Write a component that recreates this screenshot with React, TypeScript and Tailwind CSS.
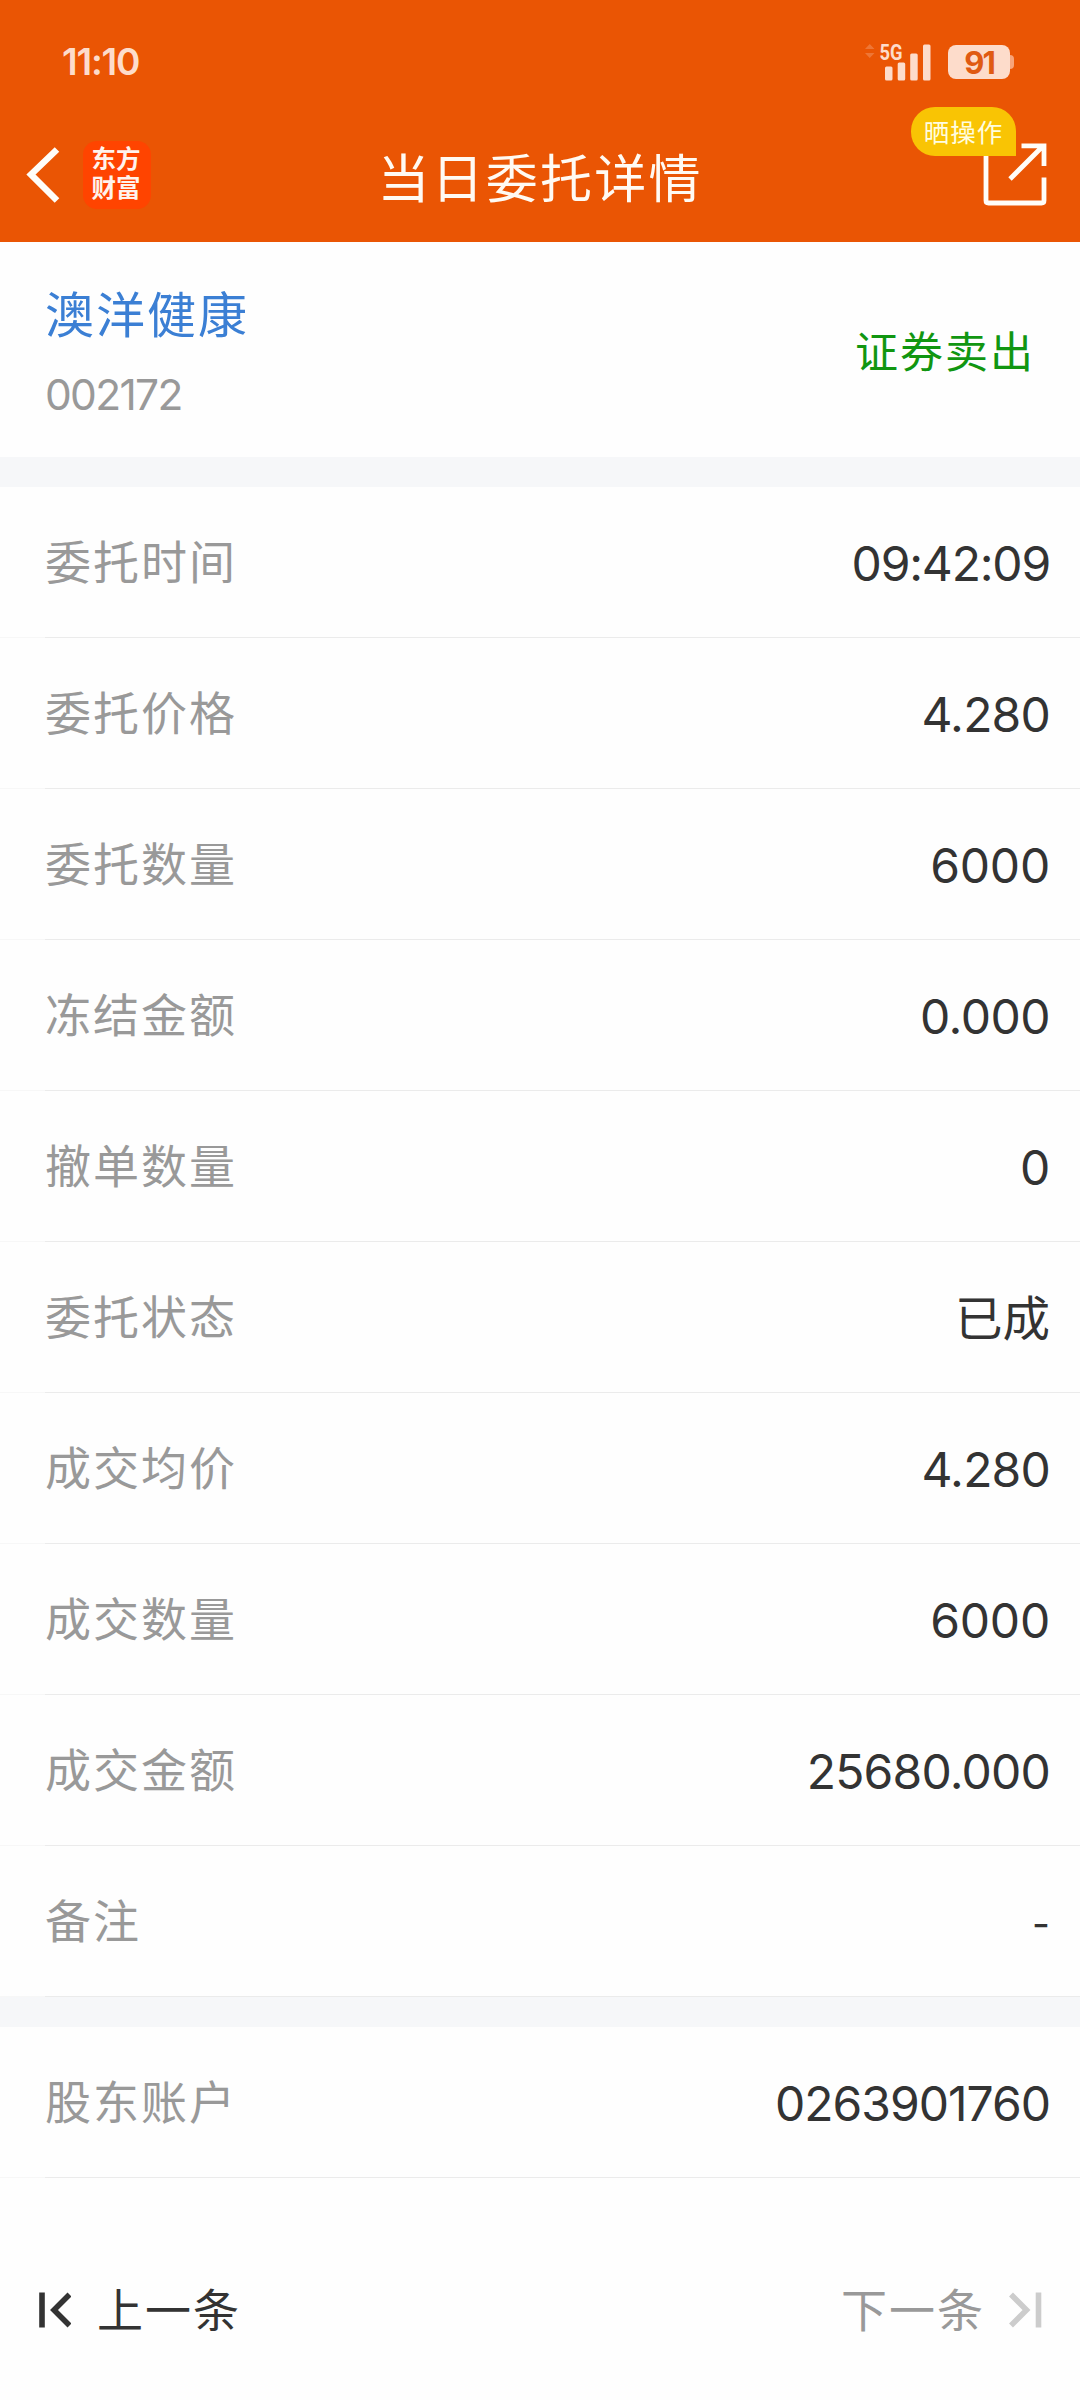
interface Field {
  label: string;
  value: string;
  className?: string;
}

const orderFields: Field[] = [
  { label: "委托时间", value: "09:42:09", className: "text-[48px] tracking-[-1.2px]" },
  { label: "委托价格", value: "4.280", className: "text-[48px] tracking-[-0.8px]" },
  { label: "委托数量", value: "6000" },
  { label: "冻结金额", value: "0.000", className: "text-[48px] tracking-[-0.5px]" },
  { label: "撤单数量", value: "0" },
  { label: "委托状态", value: "已成", className: "text-[47.5px]" },
  { label: "成交均价", value: "4.280", className: "text-[48px] tracking-[-0.8px]" },
  { label: "成交数量", value: "6000" },
  { label: "成交金额", value: "25680.000", className: "text-[48px] tracking-[-0.8px]" },
  { label: "备注", value: "-", className: "text-[39px] pt-[2px]" },
];

const accountFields: Field[] = [
  { label: "股东账户", value: "0263901760", className: "text-[48px] tracking-[-1px]" },
];

export default function App() {
  return (
    <div className="flex h-[2400px] w-[1080px] flex-col bg-[#fefefe] font-['Inter','Noto_Sans_CJK_SC',sans-serif] text-[#333333]">
      <header className="h-[242px] flex-none bg-[#ea5504]">
        <StatusBar />
        <NavBar />
      </header>

      <section className="flex h-[215px] flex-none justify-between pr-[45px] pl-[45px]">
        <div className="flex flex-col">
          <h2 className="mt-[38px] h-[72px] text-[49px] leading-[72px] tracking-[2px] text-[#3b7fd4]">澳洋健康</h2>
          <p className="mt-[13px] h-[60px] text-[42.5px] leading-[60px] tracking-[-1.7px] text-[#999999]">002172</p>
        </div>
        <span className="mt-[78px] h-[64px] text-[43px] leading-[64px] tracking-[2px] text-[#119611]">证券卖出</span>
      </section>

      <Divider />
      <FieldList fields={orderFields} />
      <Divider />
      <FieldList fields={accountFields} />

      <footer className="flex h-[222px] flex-none items-center justify-between pt-[42px] pr-[38px] pl-[38px] text-[46px] tracking-[2px]">
        <button type="button" className="flex items-center gap-[26px]">
          <svg viewBox="0 0 33 38" className="h-[38px] w-[33px]" fill="none" stroke="currentColor" strokeWidth="5.6">
            <path d="M4 1.5v35M31.5 3.5 16 19l15.5 15.5" />
          </svg>
          <span className="leading-[70px]">上一条</span>
        </button>
        <button type="button" disabled className="flex items-center gap-[24px] text-[#999999]">
          <span className="leading-[70px]">下一条</span>
          <svg viewBox="0 0 33 38" className="h-[38px] w-[33px] text-[#cccccc]" fill="none" stroke="currentColor" strokeWidth="5.6">
            <path d="M29.5 1.5v35M2 3.5 17.5 19 2 34.5" />
          </svg>
        </button>
      </footer>
    </div>
  );
}

function StatusBar() {
  return (
    <div className="flex h-[124px] items-center justify-between pr-[66px] pl-[62px] text-[#fddccb]">
      <span className="-mt-[2px] text-[37px] leading-none font-semibold tracking-[-1.2px]">11:10</span>
      <div className="flex items-center gap-[17px]">
        <svg viewBox="0 -8 66 54" className="h-[54px] w-[66px]" fill="currentColor">
          <path d="M0 6 4.75 1 9.5 6zM0 10h9.5L4.75 15z" opacity="0.25" />
          <text x="14.5" y="16.5" fontFamily="Roboto, sans-serif" fontSize="22" fontWeight="700" textLength="23" lengthAdjust="spacingAndGlyphs">
            5G
          </text>
          <rect x="20" y="23.5" width="7.5" height="14" rx="1.5" />
          <rect x="32.7" y="19.5" width="7.5" height="18" rx="1.5" />
          <rect x="45.2" y="10.5" width="7.5" height="27" rx="1.5" />
          <rect x="58" y="1.5" width="7.5" height="36" rx="1.5" />
        </svg>
        <div className="flex items-center">
          <span className="flex h-[34px] w-[62px] items-center justify-center rounded-[8px] bg-[#fddccb] text-[31px] leading-none font-bold tracking-[-2px] text-[#e05a12]">
            91
          </span>
          <span className="h-[14px] w-[4px] rounded-r-[4px] bg-[#f7a47a]" />
        </div>
      </div>
    </div>
  );
}

function NavBar() {
  return (
    <div className="flex h-[118px] items-start justify-between pr-[33px] pl-[26px]">
      <div className="flex w-[180px] items-start pt-[17px]">
        <svg viewBox="0 0 34 58" className="mt-[5px] h-[58px] w-[34px]" fill="none" stroke="#fffdf8" strokeWidth="6.5">
          <path d="M31 3.5 5 28.5l26 26" />
        </svg>
        <div className="ml-[23px] flex h-[68px] w-[68px] flex-col items-center rounded-[14px] bg-[#ff4400] pt-[4px] pr-[2px] text-[24.5px] leading-[29px] font-bold text-[#fff3ec]">
          <span>东方</span>
          <span>财富</span>
        </div>
      </div>
      <h1 className="mt-[18px] ml-[7px] text-[52px] leading-[76px] tracking-[2.2px] text-[#fffaf3]">当日委托详情</h1>
      <div className="relative flex w-[180px] justify-end pt-[18px]">
        <svg viewBox="0 0 64 65" className="h-[65px] w-[64px]" fill="none" stroke="#fffdf8" strokeWidth="4.8">
          <path d="M3 8v50.5q0 2.5 2.5 2.5h53q2.5 0 2.500-2.500V35.500" />
          <path d="M38.5 3.8H61M61 1.5V24M27 37 60 4" />
        </svg>
        <span className="absolute top-[-17px] right-[31px] flex h-[49px] w-[105px] items-center justify-center rounded-[24px] rounded-br-none bg-[#f9c404] pt-[3px] text-[25.5px] tracking-[1px] text-[#fffde0]">
          晒操作
        </span>
      </div>
    </div>
  );
}

function Divider() {
  return <div className="h-[30px] flex-none bg-[#f6f7f9]" />;
}

function FieldList({ fields }: { fields: Field[] }) {
  return (
    <dl className="flex flex-none flex-col">
      {fields.map((f) => (
        <div key={f.label}>
          <div className="flex h-[150px] items-center justify-between pt-[3px] pr-[30px] pl-[45px]">
            <dt className="mb-[3px] text-[46px] leading-[70px] tracking-[2px] text-[#999999]">{f.label}</dt>
            <dd className={`leading-[70px] font-[370] ${f.className ?? "text-[48px] tracking-[-0.2px]"}`}>{f.value}</dd>
          </div>
          <div className="h-px border-l-[45px] border-[#f7f7f7] bg-[#ebebeb]" />
        </div>
      ))}
    </dl>
  );
}
